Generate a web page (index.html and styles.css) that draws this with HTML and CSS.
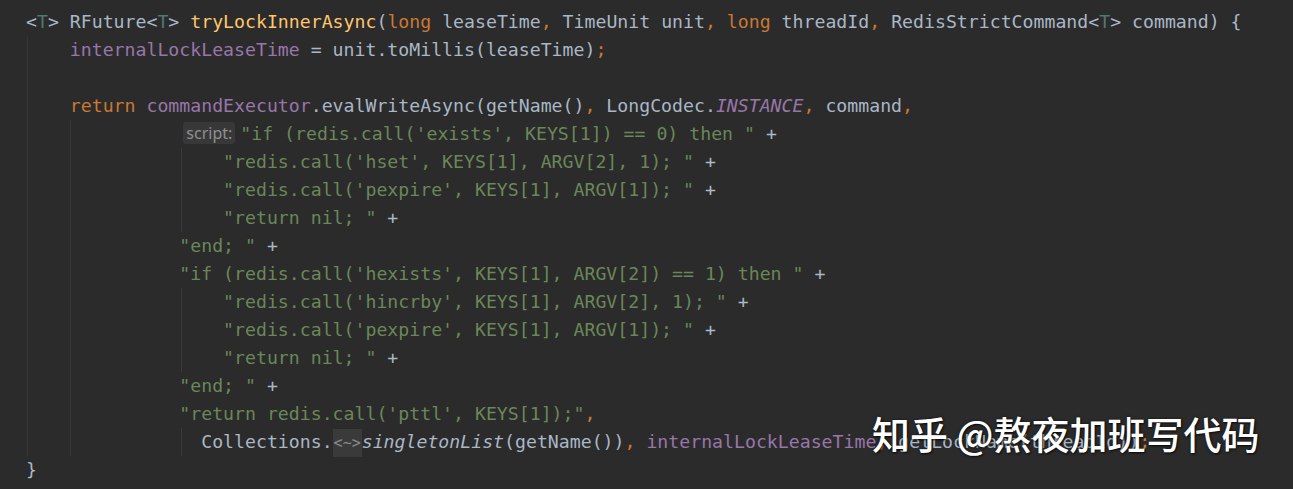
FILE: index.html
```html
<!DOCTYPE html>
<html>
<head>
<meta charset="utf-8">
<link rel="stylesheet" href="styles.css">
</head>
<body>
<div class="editor">
  <div class="line"><span class="d">&lt;</span><span class="tp">T</span><span class="d">&gt; RFuture&lt;</span><span class="tp">T</span><span class="d">&gt; </span><span class="fn">tryLockInnerAsync</span><span class="d">(</span><span class="kw">long</span><span class="d"> leaseTime</span><span class="kw">,</span><span class="d"> TimeUnit unit</span><span class="kw">,</span> <span class="kw">long</span><span class="d"> threadId</span><span class="kw">,</span><span class="d"> RedisStrictCommand&lt;</span><span class="tp">T</span><span class="d">&gt; command) {</span></div>
  <div class="line g1">    <span class="fd">internalLockLeaseTime</span><span class="d"> = unit.toMillis(leaseTime)</span><span class="kw">;</span></div>
  <div class="line g1"> </div>
  <div class="line g1">    <span class="kw">return</span> <span class="fd">commandExecutor</span><span class="d">.evalWriteAsync(getName()</span><span class="kw">,</span><span class="d"> LongCodec.</span><span class="fd it">INSTANCE</span><span class="kw">,</span><span class="d"> command</span><span class="kw">,</span></div>
  <div class="line g2">              <span class="hint">script:</span><span class="st">"if (redis.call('exists', KEYS[1]) == 0) then "</span><span class="d"> +</span></div>
  <div class="line g3">                  <span class="st">"redis.call('hset', KEYS[1], ARGV[2], 1); "</span><span class="d"> +</span></div>
  <div class="line g3">                  <span class="st">"redis.call('pexpire', KEYS[1], ARGV[1]); "</span><span class="d"> +</span></div>
  <div class="line g3">                  <span class="st">"return nil; "</span><span class="d"> +</span></div>
  <div class="line g2">              <span class="st">"end; "</span><span class="d"> +</span></div>
  <div class="line g2">              <span class="st">"if (redis.call('hexists', KEYS[1], ARGV[2]) == 1) then "</span><span class="d"> +</span></div>
  <div class="line g3">                  <span class="st">"redis.call('hincrby', KEYS[1], ARGV[2], 1); "</span><span class="d"> +</span></div>
  <div class="line g3">                  <span class="st">"redis.call('pexpire', KEYS[1], ARGV[1]); "</span><span class="d"> +</span></div>
  <div class="line g3">                  <span class="st">"return nil; "</span><span class="d"> +</span></div>
  <div class="line g2">              <span class="st">"end; "</span><span class="d"> +</span></div>
  <div class="line g2">              <span class="st">"return redis.call('pttl', KEYS[1]);"</span><span class="kw">,</span></div>
  <div class="line g3">                <span class="d">Collections.</span><span class="hint2">&lt;~&gt;</span><span class="d it">singletonList</span><span class="d">(getName())</span><span class="kw">,</span> <span class="fd">internalLockLeaseTime</span><span class="kw">,</span><span class="d"> getLockName(threadId))</span><span class="kw">;</span></div>
  <div class="line"><span class="d">}</span></div>
</div>
<div class="watermark">知乎 @熬夜加班写代码</div>
</body>
</html>
```

FILE: styles.css
```css
html, body {
  margin: 0;
  padding: 0;
  background: #2b2b2b;
  height: 100%;
  overflow: hidden;
}

body {
  position: relative;
}

.editor {
  padding: 8px 0 0 26px;
  font-family: "DejaVu Sans Mono", "Liberation Mono", monospace;
  font-size: 18.2px;
  line-height: 28px;
  color: #a9b7c6;
}

.line {
  white-space: pre;
  height: 28px;
  margin-left: -26px;
  padding-left: 26px;
}

.g1 {
  background: linear-gradient(#363636, #363636) no-repeat 27px 0 / 1px 100%;
}

.g2 {
  background:
    linear-gradient(#363636, #363636) no-repeat 27px 0 / 1px 100%,
    linear-gradient(#363636, #363636) no-repeat 70px 0 / 1px 100%;
}

.g3 {
  background:
    linear-gradient(#363636, #363636) no-repeat 27px 0 / 1px 100%,
    linear-gradient(#363636, #363636) no-repeat 70px 0 / 1px 100%,
    linear-gradient(#3a3a3a, #3a3a3a) no-repeat 181px 0 / 1px 100%;
}

.d { color: #a9b7c6; }
.kw { color: #cc7832; }
.fn { color: #ffc66d; }
.fd { color: #9876aa; }
.tp { color: #507874; }
.st { color: #6a8759; }
.it { font-style: italic; }

.hint {
  display: inline-block;
  font-family: "Noto Sans", "DejaVu Sans", sans-serif;
  font-size: 16px;
  line-height: 22px;
  padding: 0 3px 0 3px;
  margin: 0 5px 0 4px;
  color: #8f8f8f;
  background: #383838;
  border-radius: 3px;
  vertical-align: 1px;
}

.hint2 {
  color: #8a8a8a;
  background: #3a3a3a;
  font-size: 15px;
  padding: 5px 1px;
}

.watermark {
  position: absolute;
  left: 872px;
  top: 408px;
  font-family: "Noto Sans CJK SC", "Noto Sans", sans-serif;
  font-size: 38px;
  line-height: 50px;
  font-weight: 500;
  color: #ffffff;
  text-shadow: 1px 1px 2px rgba(0, 0, 0, 0.7), 0 0 3px rgba(0, 0, 0, 0.5);
  white-space: nowrap;
}
```
